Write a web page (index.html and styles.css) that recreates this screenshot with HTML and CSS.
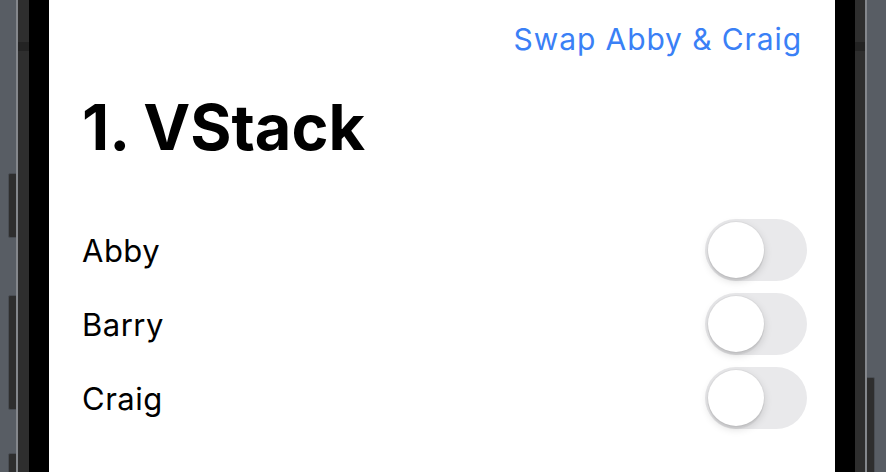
FILE: index.html
```html
<!DOCTYPE html>
<html>
<head>
<meta charset="utf-8">
<link rel="stylesheet" href="styles.css">
</head>
<body>
<div class="stage">
  <div class="side-btn left b1"></div>
  <div class="side-btn left b2"></div>
  <div class="side-btn left b3"></div>
  <div class="side-btn right b4"></div>
  <div class="frame left-frame"><div class="band"></div></div>
  <div class="bezel"></div>
  <div class="screen">
    <div class="toolbar"><span class="link">Swap Abby &amp; Craig</span></div>
    <h1 class="title">1. VStack</h1>
    <div class="list">
      <div class="row"><span class="name">Abby</span><span class="toggle"><span class="knob"></span></span></div>
      <div class="row"><span class="name">Barry</span><span class="toggle"><span class="knob"></span></span></div>
      <div class="row"><span class="name">Craig</span><span class="toggle"><span class="knob"></span></span></div>
    </div>
  </div>
  <div class="bezel"></div>
  <div class="frame right-frame"><div class="band"></div></div>
</div>
</body>
</html>
```
FILE: styles.css
```css
html, body {
  margin: 0;
  padding: 0;
}
body {
  background: #585d64;
  font-family: Inter, "Noto Sans", sans-serif;
}
.stage {
  position: relative;
  display: flex;
  height: 472px;
  overflow: hidden;
  padding: 0 19px 0 16px;
  box-sizing: border-box;
}
.frame {
  width: 11px;
  background: #2e2e2e;
  position: relative;
}
.left-frame {
  border-left: 2px solid #84878c;
}
.right-frame {
  width: 10px;
  border-right: 2px solid #84878c;
}
.band {
  height: 9px;
  margin-top: 42px;
  background: #232323;
}
.bezel {
  width: 20px;
  background: #000;
}
.screen {
  flex: 1;
  background: #fff;
  display: flex;
  flex-direction: column;
  padding: 0 28px 0 33px;
}
.toolbar {
  display: flex;
  justify-content: flex-end;
  padding-top: 19px;
  padding-right: 5px;
  height: 40px;
}
.link {
  color: #3a80f6;
  font-size: 30px;
  letter-spacing: 0.9px;
  line-height: 40px;
}
.title {
  margin: 0;
  margin-top: 30px;
  font-size: 63px;
  font-weight: 700;
  line-height: 76px;
  color: #000;
  letter-spacing: 0;
}
.list {
  margin-top: 54px;
  display: flex;
  flex-direction: column;
  gap: 12px;
}
.row {
  display: flex;
  align-items: center;
  justify-content: space-between;
  height: 62px;
}
.name {
  font-size: 31px;
  letter-spacing: 0.5px;
  color: #000;
}
.toggle {
  width: 102px;
  height: 62px;
  border-radius: 31px;
  background: #e9e9eb;
  display: flex;
  align-items: center;
  padding-left: 3px;
  box-sizing: border-box;
}
.knob {
  width: 56px;
  height: 56px;
  border-radius: 50%;
  background: #fff;
  box-shadow: 0 3px 8px rgba(0,0,0,0.15), 0 3px 1px rgba(0,0,0,0.06), 0 0 0 1px rgba(0,0,0,0.03);
}
.side-btn {
  position: absolute;
  background: #2e2e2e;
  border: 1px solid #4a4e54;
  border-radius: 2px;
}
.side-btn.left {
  left: 8px;
  width: 8px;
}
.b1 { top: 173px; height: 63px; }
.b2 { top: 295px; height: 113px; }
.b3 { top: 453px; height: 40px; }
.side-btn.right {
  left: 866px;
  width: 8px;
  border-left: none;
}
.b4 { top: 377px; height: 120px; }
```
